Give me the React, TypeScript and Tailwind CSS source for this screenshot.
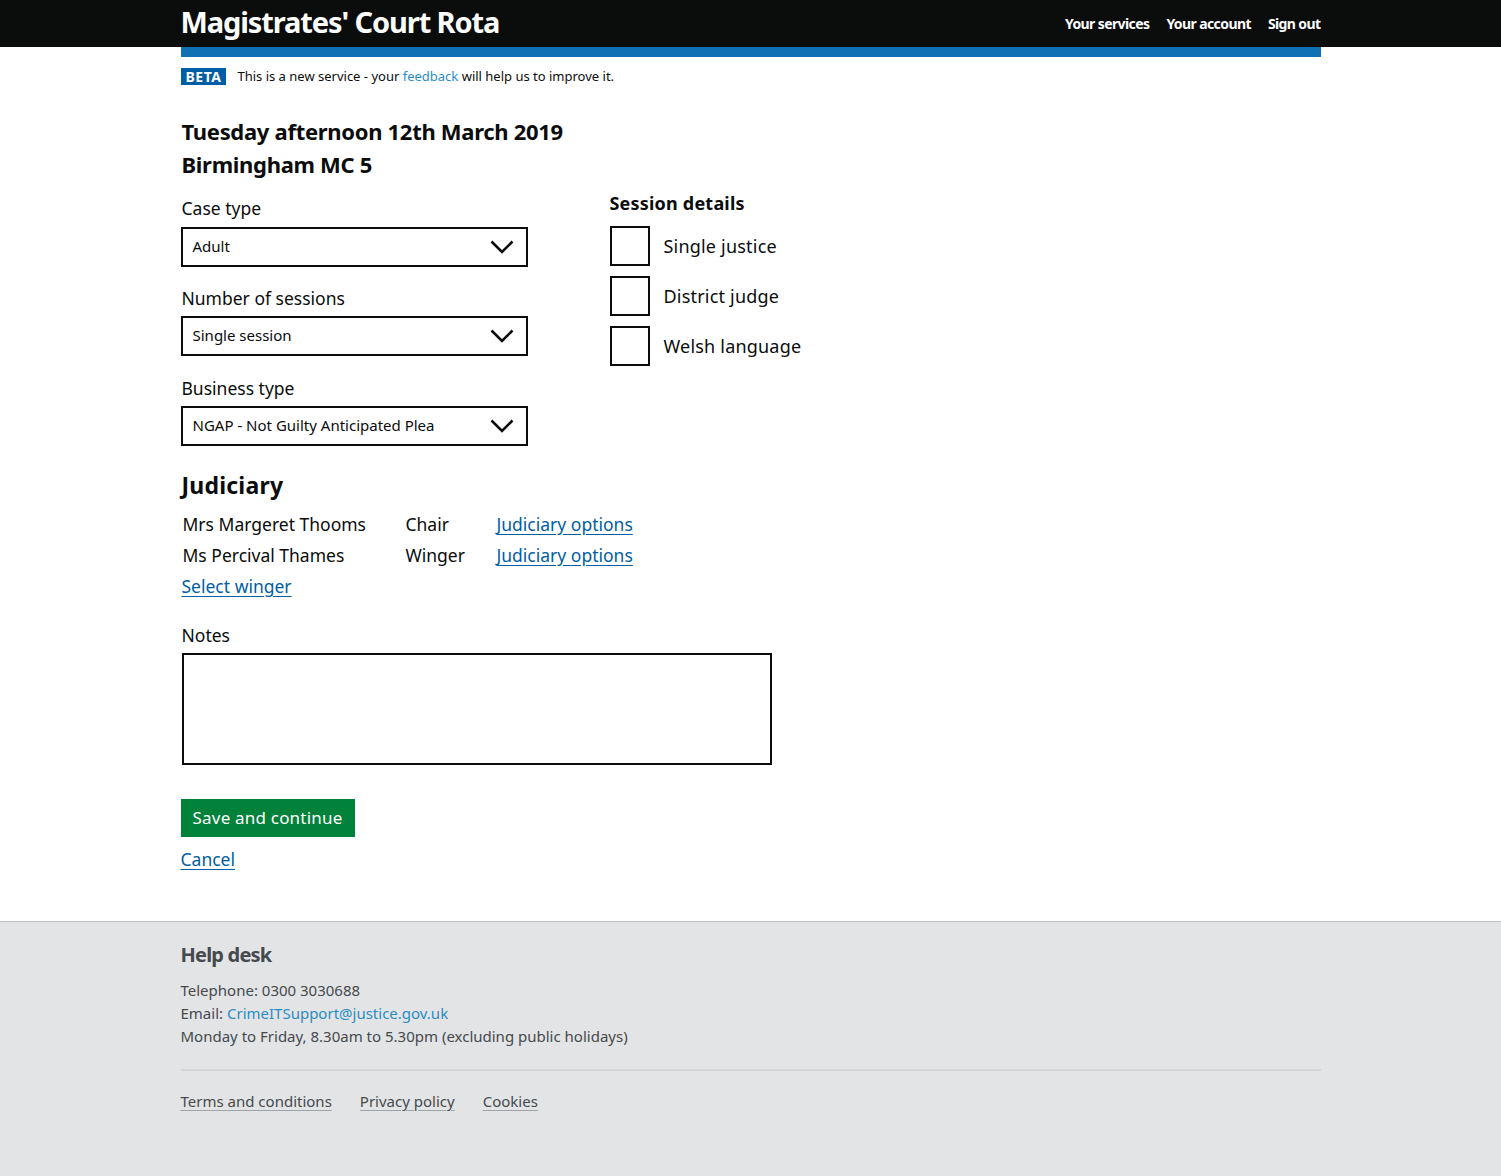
import React from "react";

const font = { fontFamily: '"Noto Sans", Roboto, Arial, sans-serif' };

function Select({ value }: { value: string }) {
  return (
    <div className="flex h-[40px] w-[347px] items-center justify-between border-2 border-[#0b0c0c] pl-[10px] pr-[12px] text-[15px] text-[#0b0c0c]">
      <span>{value}</span>
      <svg width="24" height="14" viewBox="0 0 24 14" fill="none">
        <path d="M1.5 1.5 L12 12 L22.5 1.5" stroke="#0b0c0c" strokeWidth="2.6" />
      </svg>
    </div>
  );
}

function Checkbox({ label }: { label: string }) {
  return (
    <div className="flex h-[40px] items-center gap-[14px]">
      <div className="h-[40px] w-[40px] border-2 border-[#0b0c0c]" />
      <span className="pt-[1px] text-[18px] tracking-[0.2px] text-[#0b0c0c]">{label}</span>
    </div>
  );
}

export default function App() {
  return (
    <div style={font} className="min-h-[1176px] flex flex-col bg-white text-[#0b0c0c]">
      <header className="bg-[#0b0c0c]">
        <div className="mx-auto flex h-[47px] w-[1140px] items-center justify-between">
          <div className="text-[29px] font-bold tracking-[-1.1px] text-white leading-none pb-[4px]">Magistrates' Court Rota</div>
          <nav className="flex gap-[17px] text-[14px] font-bold tracking-[-0.6px] text-white">
            <span>Your services</span>
            <span>Your account</span>
            <span>Sign out</span>
          </nav>
        </div>
      </header>
      <main className="mx-auto w-[1140px] flex-1">
        <div className="h-[10px] bg-[#1070b4]" />
        <div className="mt-[10px] flex items-center gap-[11px] text-[13px]">
          <span className="bg-[#005ea5] px-[5px] text-[14px] font-bold leading-[17px] tracking-[0.5px] text-white">BETA</span>
          <span>
            This is a new service - your <span className="text-[#2b8cc4]">feedback</span> will help us to improve it.
          </span>
        </div>
        <h1 className="mt-[28px] pl-[1px] text-[22px] font-bold leading-[33px] tracking-[-0.3px]">
          Tuesday afternoon 12th March 2019
          <br />
          Birmingham MC 5
        </h1>
        <div className="mt-[12px] flex">
          <div className="w-[429px]">
            <div className="pl-[1px] text-[17.5px] leading-[30px]">Case type</div>
            <div className="mt-[4px]"><Select value="Adult" /></div>
            <div className="mt-[16px] pl-[1px] text-[17.5px] leading-[30px]">Number of sessions</div>
            <div className="mt-[3px]"><Select value="Single session" /></div>
            <div className="mt-[17px] pl-[1px] text-[17.5px] leading-[30px]">Business type</div>
            <div className="mt-[3px]"><Select value="NGAP - Not Guilty Anticipated Plea" /></div>
          </div>
          <div>
            <div className="-mt-[5px] text-[18px] font-bold leading-[30px] tracking-[0.2px]">Session details</div>
            <div className="mt-[8px] flex flex-col gap-[10px]">
              <Checkbox label="Single justice" />
              <Checkbox label="District judge" />
              <Checkbox label="Welsh language" />
            </div>
          </div>
        </div>
        <h2 className="mt-[23px] pl-[1px] text-[23px] font-bold leading-[32px] tracking-[0.2px]">Judiciary</h2>
        <div className="mt-[8px] text-[17.5px]">
          <div className="flex h-[31px] items-center">
            <span className="w-[225px] pl-[2px]">Mrs Margeret Thooms</span>
            <span className="w-[91px]">Chair</span>
            <a className="text-[#005ea5] underline underline-offset-[3px]">Judiciary options</a>
          </div>
          <div className="flex h-[31px] items-center">
            <span className="w-[225px] pl-[2px]">Ms Percival Thames</span>
            <span className="w-[91px]">Winger</span>
            <a className="text-[#005ea5] underline underline-offset-[3px]">Judiciary options</a>
          </div>
          <div className="flex h-[31px] items-center pl-[1px]">
            <a className="text-[#005ea5] underline underline-offset-[3px]">Select winger</a>
          </div>
        </div>
        <div className="mt-[18px] pl-[1px] text-[17.5px] leading-[30px]">Notes</div>
        <div className="ml-[1px] mt-[3px] h-[112px] w-[590px] border-2 border-[#0b0c0c]" />
        <button className="mt-[34px] h-[38px] w-[174px] bg-[#00823b] text-[17px] tracking-[0.2px] text-white">Save and continue</button>
        <div className="mt-[9px] pb-[40px] text-[17.5px]">
          <a className="text-[#005ea5] underline underline-offset-[3px]">Cancel</a>
        </div>
      </main>
      <footer className="h-[255px] border-t border-[#bfc1c3] bg-[#e3e4e6] text-[#454a4c]">
        <div className="mx-auto w-[1140px]">
          <div className="mt-[18px] text-[20px] font-bold leading-[30px] tracking-[-0.8px]">Help desk</div>
          <div className="mt-[9px] text-[15px] leading-[23px]">
            <div>Telephone: 0300 3030688</div>
            <div>
              Email: <span className="text-[#2b8cc4]">CrimeITSupport@justice.gov.uk</span>
            </div>
            <div>Monday to Friday, 8.30am to 5.30pm (excluding public holidays)</div>
          </div>
          <div className="mt-[21px] border-t-2 border-[#d3d5d7]" />
          <div className="mt-[19px] flex gap-[28px] text-[15px]">
            <span className="underline decoration-[#a1a4a6] underline-offset-[3px]">Terms and conditions</span>
            <span className="underline decoration-[#a1a4a6] underline-offset-[3px]">Privacy policy</span>
            <span className="underline decoration-[#a1a4a6] underline-offset-[3px]">Cookies</span>
          </div>
        </div>
      </footer>
    </div>
  );
}
